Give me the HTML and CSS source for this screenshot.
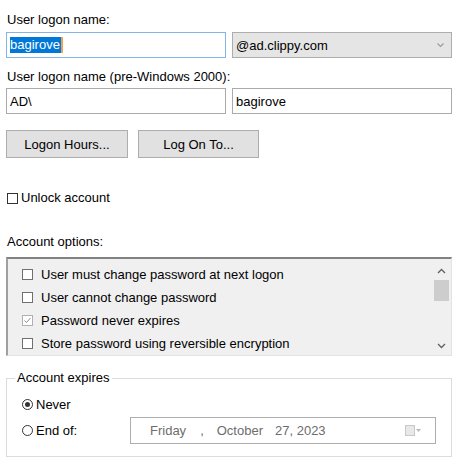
FILE: index.html
```html
<!DOCTYPE html>
<html>
<head>
<meta charset="utf-8">
<link rel="stylesheet" href="styles.css">
</head>
<body>
<div class="page">
  <div class="label l1">User logon name:</div>
  <div class="pair">
    <div class="input focus"><span class="sel">bagirove</span><span class="caret"></span></div>
    <div class="combo"><span>@ad.clippy.com</span>
      <svg class="chev" width="9" height="6" viewBox="0 0 9 6"><path d="M1.5 1.5 L4.5 4.5 L7.5 1.5" fill="none" stroke="#9a9a9a" stroke-width="1.1"/></svg>
    </div>
  </div>
  <div class="label l2">User logon name (pre-Windows 2000):</div>
  <div class="pair">
    <div class="input">AD\</div>
    <div class="input">bagirove</div>
  </div>
  <div class="buttons">
    <div class="btn b1">Logon Hours...</div>
    <div class="btn b2">Log On To...</div>
  </div>
  <div class="unlock"><span class="box"></span>Unlock account</div>
  <div class="label l3">Account options:</div>
  <div class="listbox">
    <div class="rows">
      <div class="row"><span class="cb"></span>User must change password at next logon</div>
      <div class="row"><span class="cb"></span>User cannot change password</div>
      <div class="row"><span class="cb checked"><svg width="9" height="9" viewBox="0 0 9 9"><path d="M1.5 4.5 L3.5 6.5 L7.5 2" fill="none" stroke="#8c8c8c" stroke-width="1"/></svg></span>Password never expires</div>
      <div class="row"><span class="cb"></span>Store password using reversible encryption</div>
    </div>
    <div class="scrollbar">
      <svg class="arrow" width="9" height="6" viewBox="0 0 9 6"><path d="M1 5 L4.5 1.5 L8 5" fill="none" stroke="#606060" stroke-width="1.3"/></svg>
      <div class="thumb"></div>
      <div class="track"></div>
      <svg class="arrow" width="9" height="6" viewBox="0 0 9 6"><path d="M1 1 L4.5 4.5 L8 1" fill="none" stroke="#606060" stroke-width="1.3"/></svg>
    </div>
  </div>
  <fieldset class="group">
    <legend>Account expires</legend>
    <div class="radio-row r1"><span class="radio on"></span>Never</div>
    <div class="radio-row r2"><span class="radio"></span><span class="endof">End of:</span>
      <div class="date">
        <span class="d-day">Friday</span><span class="d-comma">,</span><span class="d-month">October</span><span class="d-rest">27, 2023</span>
        <span class="cal"><span class="calbox"></span><svg width="5" height="3" viewBox="0 0 5 3"><path d="M0 0 L5 0 L2.5 3 Z" fill="#b8b8b8"/></svg></span>
      </div>
    </div>
  </fieldset>
</div>
</body>
</html>
```

FILE: styles.css
```css
html, body {
  margin: 0;
  padding: 0;
  background: #ffffff;
}
body {
  font-family: "Liberation Sans", Arial, sans-serif;
  font-size: 13px;
  color: #000;
}
.page {
  padding: 12px 9px 0 6px;
  width: 446px;
}
.label {
  line-height: 16px;
  height: 16px;
  padding-left: 1px;
}
.l1 { margin-bottom: 4px; }
.l2 { margin-top: 11px; margin-bottom: 3px; }
.l3 { margin-top: 28px; }
.pair {
  display: flex;
  gap: 6px;
}
.input, .combo {
  box-sizing: border-box;
  width: 220px;
  height: 26px;
  border: 1px solid #ababab;
  display: flex;
  align-items: center;
  padding-left: 3px;
  background: #fff;
}
.input.focus {
  border-color: #86b4e6;
}
.sel {
  background: #0078d7;
  color: #fff;
  line-height: 16px;
  padding: 0 1px 0 0;
}
.caret {
  display: inline-block;
  width: 2px;
  height: 16px;
  background: #f0a050;
}
.combo {
  background: #e5e5e5;
  border-color: #adadad;
  justify-content: space-between;
  padding-right: 6px;
}
.buttons {
  display: flex;
  gap: 10px;
  margin-top: 16px;
}
.btn {
  box-sizing: border-box;
  height: 28px;
  background: #e1e1e1;
  border: 1px solid #adadad;
  display: flex;
  align-items: center;
  justify-content: center;
}
.b1 { width: 122px; }
.b2 { width: 121px; }
.unlock {
  margin-top: 32px;
  height: 16px;
  line-height: 16px;
  display: flex;
  align-items: center;
  padding-left: 1px;
}
.box {
  box-sizing: border-box;
  width: 11px;
  height: 11px;
  border: 1px solid #333;
  margin-right: 3px;
}
.listbox {
  margin-top: 7px;
  box-sizing: border-box;
  height: 99px;
  background: #f0f0f0;
  border-top: 2px solid #828282;
  border-left: 2px solid #a0a0a0;
  border-right: 1px solid #e3e3e3;
  border-bottom: 1px solid #e3e3e3;
  display: flex;
  width: 446px;
}
.rows {
  flex: 1;
  padding-top: 4px;
}
.row {
  height: 23px;
  display: flex;
  align-items: center;
  padding-left: 14px;
}
.cb {
  box-sizing: border-box;
  width: 11px;
  height: 11px;
  border: 1px solid #707070;
  background: #fff;
  margin-right: 8px;
  display: flex;
  align-items: center;
  justify-content: center;
}
.cb.checked {
  border-color: #b0b0b0;
}
.cb svg { display: block; }
.scrollbar {
  width: 19px;
  display: flex;
  flex-direction: column;
  align-items: center;
  background: #f0f0f0;
  padding-top: 9px;
  padding-bottom: 6px;
  box-sizing: border-box;
}
.arrow { display: block; flex: none; }
.thumb {
  width: 15px;
  height: 21px;
  background: #cdcdcd;
  margin-top: 6px;
}
.track { flex: 1; }
.group {
  margin: 14px 0 0 0;
  padding: 0 0 0 15px;
  border: 1px solid #dcdcdc;
  width: 446px;
  box-sizing: border-box;
  height: 87px;
}
.group legend {
  padding: 0 2px;
  margin-left: -7px;
  line-height: 16px;
}
.radio-row {
  display: flex;
  align-items: center;
  height: 16px;
}
.r1 { margin-top: 10px; }
.r2 { margin-top: 10px; }
.radio {
  box-sizing: border-box;
  width: 11px;
  height: 11px;
  border: 1px solid #333;
  border-radius: 50%;
  margin-right: 3px;
  position: relative;
  background: #fff;
}
.radio.on::after {
  content: "";
  position: absolute;
  left: 2px;
  top: 2px;
  width: 5px;
  height: 5px;
  border-radius: 50%;
  background: #333;
}
.endof { width: 94px; }
.date {
  box-sizing: border-box;
  width: 306px;
  height: 27px;
  border: 1px solid #adadad;
  display: flex;
  align-items: center;
  color: #6d6d6d;
  padding-left: 19px;
  flex: none;
}
.d-comma { margin-left: 14px; }
.d-month { margin-left: 13px; }
.d-rest { margin-left: 12px; }
.cal {
  margin-left: auto;
  margin-right: 14px;
  display: flex;
  align-items: center;
  gap: 1px;
}
.calbox {
  width: 8px;
  height: 9px;
  border: 1px solid #c8c8c8;
  background: #e8e8e8;
}
```
